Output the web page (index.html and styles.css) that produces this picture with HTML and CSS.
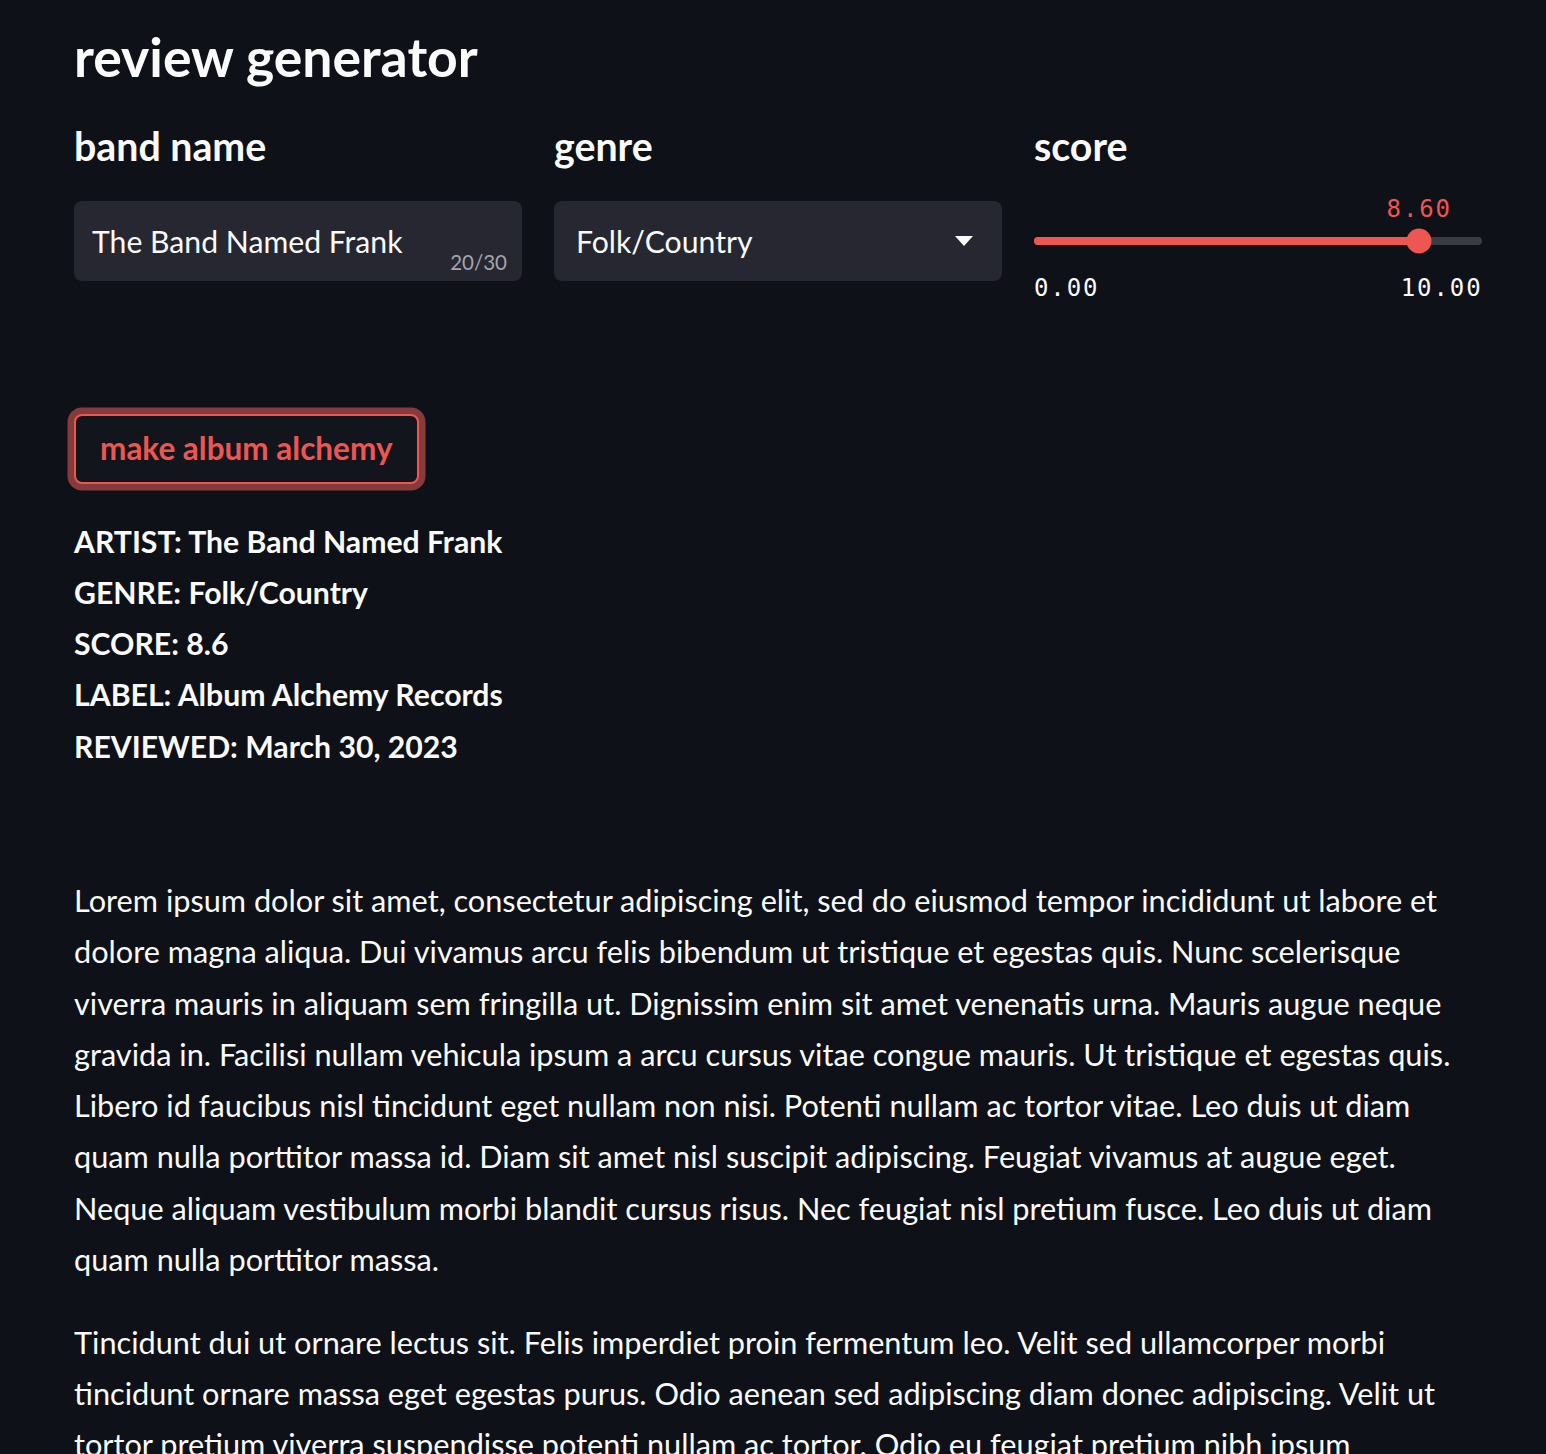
FILE: index.html
```html
<!DOCTYPE html>
<html lang="en">
<head>
<meta charset="utf-8">
<title>review generator</title>
<link rel="stylesheet" href="styles.css">
</head>
<body>
<main class="main">
  <h1 class="title">review generator</h1>

  <section class="controls">
    <div class="field">
      <label class="field-label">band name</label>
      <div class="text-input">
        <span class="input-value">The Band Named Frank</span>
        <span class="counter">20/30</span>
      </div>
    </div>
    <div class="field">
      <label class="field-label">genre</label>
      <div class="select">
        <span class="select-value">Folk/Country</span>
        <svg class="select-arrow" width="18" height="10" viewBox="0 0 18 10"><polygon points="0,0 18,0 9,10" fill="#fafafa"/></svg>
      </div>
    </div>
    <div class="field">
      <label class="field-label">score</label>
      <div class="slider">
        <div class="track">
          <div class="track-fill" style="width:86%"></div>
          <div class="thumb" style="left:86%">
            <span class="thumb-value">8.60</span>
          </div>
        </div>
      </div>
      <div class="ticks">
        <span>0.00</span>
        <span>10.00</span>
      </div>
    </div>
  </section>

  <div class="actions">
    <button class="btn">make album alchemy</button>
  </div>

  <p class="info">
    ARTIST: The Band Named Frank<br>
    GENRE: Folk/Country<br>
    SCORE: 8.6<br>
    LABEL: Album Alchemy Records<br>
    REVIEWED: March 30, 2023
  </p>

  <div class="review">
    <p>Lorem ipsum dolor sit amet, consectetur adipiscing elit, sed do eiusmod tempor incididunt ut labore et<br>dolore magna aliqua. Dui vivamus arcu felis bibendum ut tristique et egestas quis. Nunc scelerisque<br>viverra mauris in aliquam sem fringilla ut. Dignissim enim sit amet venenatis urna. Mauris augue neque<br>gravida in. Facilisi nullam vehicula ipsum a arcu cursus vitae congue mauris. Ut tristique et egestas quis.<br>Libero id faucibus nisl tincidunt eget nullam non nisi. Potenti nullam ac tortor vitae. Leo duis ut diam<br>quam nulla porttitor massa id. Diam sit amet nisl suscipit adipiscing. Feugiat vivamus at augue eget.<br>Neque aliquam vestibulum morbi blandit cursus risus. Nec feugiat nisl pretium fusce. Leo duis ut diam<br>quam nulla porttitor massa.</p>
    <p>Tincidunt dui ut ornare lectus sit. Felis imperdiet proin fermentum leo. Velit sed ullamcorper morbi<br>tincidunt ornare massa eget egestas purus. Odio aenean sed adipiscing diam donec adipiscing. Velit ut<br>tortor pretium viverra suspendisse potenti nullam ac tortor. Odio eu feugiat pretium nibh ipsum<br>consequat nisl vel pretium. Nibh tellus molestie nunc non blandit massa enim nec dui.</p>
  </div>
</main>
</body>
</html>
```
FILE: styles.css
```css
html, body {
  margin: 0;
  padding: 0;
  background: #0e1117;
}

body {
  color: #fafafa;
  font-family: "Lato", "Liberation Sans", sans-serif;
}

.main {
  width: 1408px;
  padding: 24px 64px 40px 74px;
}

.title {
  margin: 0;
  font-size: 53.5px;
  font-weight: 700;
  line-height: 64px;
}

.controls {
  display: grid;
  grid-template-columns: 448px 448px 448px;
  column-gap: 32px;
  margin-top: 34px;
  align-items: start;
}

.field {
  display: flex;
  flex-direction: column;
}

.field-label {
  font-size: 39.3px;
  font-weight: 700;
  line-height: 48px;
  margin-bottom: 31px;
}

.text-input,
.select {
  position: relative;
  height: 80px;
  background: #262730;
  border-radius: 8px;
  display: flex;
  align-items: center;
  box-sizing: border-box;
}

.text-input {
  padding-left: 18px;
}

.input-value,
.select-value {
  font-size: 30.2px;
  line-height: 1.2;
}

.counter {
  position: absolute;
  right: 15px;
  bottom: 8.5px;
  font-size: 20.5px;
  line-height: 21px;
  color: #a4a4ab;
}

.select {
  padding: 0 29px 0 22px;
  justify-content: space-between;
}

.select-arrow {
  display: block;
}

.slider {
  height: 80px;
  display: flex;
  align-items: center;
}

.track {
  position: relative;
  width: 100%;
  height: 8px;
  border-radius: 4px;
  background: #3a3c44;
}

.track-fill {
  height: 100%;
  border-radius: 4px;
  background: #ed5651;
}

.thumb {
  position: absolute;
  top: 50%;
  width: 25px;
  height: 25px;
  border-radius: 50%;
  background: #ed5651;
  transform: translate(-50%, -50%);
}

.thumb-value {
  position: absolute;
  left: 50%;
  bottom: calc(100% + 6px);
  transform: translateX(-50%);
  font-family: "DejaVu Sans Mono", "Liberation Mono", monospace;
  font-size: 24px;
  line-height: 28px;
  letter-spacing: 1.9px;
  color: #ed5651;
  white-space: nowrap;
}

.ticks {
  display: flex;
  justify-content: space-between;
  margin-top: -7px;
  font-family: "DejaVu Sans Mono", "Liberation Mono", monospace;
  font-size: 24px;
  line-height: 28px;
  letter-spacing: 1.9px;
  color: #fafafa;
}

.ticks span:last-child {
  margin-right: -0.5px;
}

.actions {
  margin-top: 112px;
}

.btn {
  display: inline-block;
  height: 70px;
  margin: 0;
  padding: 0 24px;
  background: #13151d;
  border: 2px solid #ed5651;
  border-radius: 8px;
  box-shadow: 0 0 0 6.5px #873a3b;
  color: #ed5651;
  font-family: "Lato", "Liberation Sans", sans-serif;
  font-size: 31.5px;
  font-weight: 700;
  line-height: 1.2;
  cursor: pointer;
}

.info {
  margin: 31.5px 0 0;
  font-size: 30.2px;
  font-weight: 700;
  line-height: 51.3px;
}

.review {
  margin-top: 103px;
}

.review p {
  margin: 0 0 31.5px;
  font-size: 30.7px;
  line-height: 51.3px;
  white-space: nowrap;
}
```
